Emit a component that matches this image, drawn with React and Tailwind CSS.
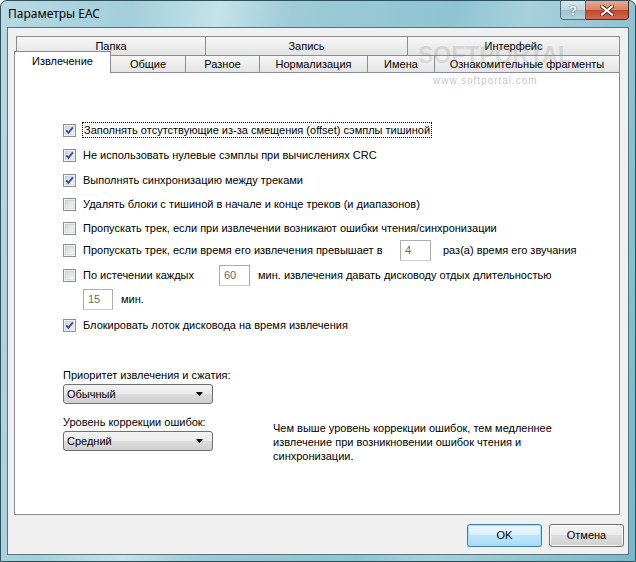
import React from 'react';

const font = { fontFamily: '"Liberation Sans", Arial, sans-serif' };

function CheckBox({ checked }) {
  return (
    <svg width="13" height="13" viewBox="0 0 13 13" className="shrink-0">
      <defs>
        <linearGradient id="cbg" x1="0" y1="0" x2="1" y2="1">
          <stop offset="0" stopColor="#cfd2d6" />
          <stop offset="1" stopColor="#f8f8f8" />
        </linearGradient>
      </defs>
      <rect x="0.5" y="0.5" width="12" height="12" fill="#fff" stroke="#8e8f8f" />
      <rect x="2" y="2" width="9" height="9" fill="url(#cbg)" stroke="#c3c6cb" strokeWidth="0.6" />
      {checked && (
        <path d="M3.2 6.4 L5.4 8.9 L9.9 3.4" fill="none" stroke="#3450a0" strokeWidth="1.9" />
      )}
    </svg>
  );
}

function Row({ checked, className = '', children }) {
  return (
    <div className={`flex h-[20px] items-center ${className}`}>
      <CheckBox checked={checked} />
      <div className="ml-[7px] flex items-center">{children}</div>
    </div>
  );
}

function NumBox({ value, w = 'w-[31px]' }) {
  return (
    <div className={`${w} h-[21px] shrink-0 border border-[#abadb3] border-b-[#c9ced4] bg-white pl-[4px] text-[11px] leading-[19px] text-[#6d6d6d]`}>
      {value}
    </div>
  );
}

function Combo({ value }) {
  return (
    <div className="flex h-[20px] w-[150px] items-center justify-between rounded-[3px] border border-[#707070] bg-[linear-gradient(#f2f2f2,#ebebeb_50%,#dddddd_50%,#cfcfcf)] pl-[3px] pr-[9px] text-[11px]">
      <span>{value}</span>
      <svg width="7" height="4" viewBox="0 0 7 4">
        <path d="M0 0 H7 L3.5 4 Z" fill="#000" />
      </svg>
    </div>
  );
}

function BackTab({ label, className = '' }) {
  return (
    <div className={`flex items-center justify-center border-t border-r border-[#898c95] bg-gradient-to-b from-[#f7f7f7] to-[#e3e3e3] text-[11px] ${className}`}>
      {label}
    </div>
  );
}

export default function App() {
  return (
    <div className="relative h-[562px] w-[636px] overflow-hidden bg-white text-black" style={font}>
      <div className="flex h-full flex-col rounded-t-[7px] border border-[#2e4f5b] bg-[linear-gradient(100deg,#b7d9e2_0%,#a3cfda_18%,#c4e2e9_30%,#9ecbd7_40%,#8ec4d2_62%,#a6d1dc_72%,#79b7c7_100%)] px-[6px] pb-[6px]">
        {/* title bar */}
        <div className="flex h-[26px] items-start justify-between">
          <div className="mt-[6px] pl-[1px] text-[12px] leading-[14px] text-black" style={{ fontFamily: '"Noto Sans", "Liberation Sans", sans-serif' }}>
            Параметры EAC
          </div>
          <div className="flex h-[19px]">
            <div className="flex w-[26px] items-center justify-center rounded-bl-[4px] border border-t-0 border-[#4b6e7a] bg-[linear-gradient(#d8e8ec,#bcd6dd_50%,#9fc3cd_50%,#b2d2da)] text-[13px] font-bold leading-none text-white [text-shadow:0_0_2px_#2c4a55]">
              ?
            </div>
            <div className="flex w-[43px] items-center justify-center rounded-br-[4px] border border-l-0 border-t-0 border-[#5a2a20] bg-[linear-gradient(#e8a691,#d7826a_50%,#c2452a_50%,#d56a4e)]">
              <svg width="14" height="11" viewBox="0 0 14 11">
                <path d="M2 1.5 L12 9.5 M12 1.5 L2 9.5" stroke="#5c2518" strokeWidth="4" strokeLinecap="square" />
                <path d="M2 1.5 L12 9.5 M12 1.5 L2 9.5" stroke="#fff" strokeWidth="2.2" strokeLinecap="square" />
              </svg>
            </div>
          </div>
        </div>

        {/* client */}
        <div className="flex flex-1 flex-col border border-[#56727c] bg-[#f0f0f0] pl-[6px] pr-[8px] pt-[8px]">
          {/* back row tabs */}
          <div className="ml-[2px] flex h-[19px]">
            <BackTab label="Папка" className="w-[190px] border-l" />
            <BackTab label="Запись" className="w-[202px]" />
            <BackTab label="Интерфейс" className="flex-1" />
          </div>
          {/* front row tabs */}
          <div className="flex h-[17px] items-end">
            <div className="relative z-10 -mb-px flex h-[22px] w-[97px] items-center justify-center border border-b-0 border-[#898c95] bg-white pb-[2px] text-[11px]">
              Извлечение
            </div>
            <BackTab label="Общие" className="h-[17px] w-[75px]" />
            <BackTab label="Разное" className="h-[17px] w-[74px]" />
            <BackTab label="Нормализация" className="h-[17px] w-[108px]" />
            <BackTab label="Имена" className="h-[17px] w-[67px]" />
            <BackTab label="Ознакомительные фрагменты" className="h-[17px] flex-1" />
          </div>

          {/* panel */}
          <div className="h-[443px] border border-[#898c95] bg-white pl-[48px] text-[11px]">
            <Row checked className="mt-[47px]">
              <span className="px-[1px] leading-[14px] outline-1 outline-dotted outline-black">
                Заполнять отсутствующие из-за смещения (offset) сэмплы тишиной
              </span>
            </Row>
            <Row checked className="mt-[5px]">Не использовать нулевые сэмплы при вычислениях CRC</Row>
            <Row checked className="mt-[5px]">Выполнять синхронизацию между треками</Row>
            <Row className="mt-[4px]">Удалять блоки с тишиной в начале и конце треков (и диапазонов)</Row>
            <Row className="mt-[4px]">Пропускать трек, если при извлечении возникают ошибки чтения/синхронизации</Row>
            <Row className="mt-[2px] h-[21px]">
              <span className="w-[317px]">Пропускать трек, если время его извлечения превышает в</span>
              <NumBox value="4" />
              <span className="ml-[12px]">раз(а) время его звучания</span>
            </Row>
            <Row className="mt-[4px] h-[21px]">
              <span className="w-[136px]">По истечении каждых</span>
              <NumBox value="60" />
              <span className="ml-[8px]">мин. извлечения давать дисководу отдых длительностью</span>
            </Row>
            <div className="ml-[20px] mt-[3px] flex h-[21px] items-center">
              <NumBox value="15" w="w-[30px]" />
              <span className="ml-[8px]">мин.</span>
            </div>
            <Row checked className="mt-[5px]">Блокировать лоток дисковода на время извлечения</Row>

            <div className="mt-[33px] leading-[14px]">Приоритет извлечения и сжатия:</div>
            <div className="mt-[2px]">
              <Combo value="Обычный" />
            </div>
            <div className="mt-[11px] flex">
              <div className="w-[150px]">
                <div className="leading-[14px]">Уровень коррекции ошибок:</div>
                <div className="mt-[2px]">
                  <Combo value="Средний" />
                </div>
              </div>
              <div className="ml-[60px] mt-[6px] leading-[14px]">
                Чем выше уровень коррекции ошибок, тем медленнее
                <br />
                извлечение при возникновении ошибок чтения и
                <br />
                синхронизации.
              </div>
            </div>
          </div>

          {/* buttons */}
          <div className="-mr-[4px] mt-[9px] flex justify-end gap-[7px] text-[11px]">
            <button className="h-[23px] w-[75px] rounded-[3px] border border-[#3c7fb1] bg-[linear-gradient(#eaf6fd,#d9f0fc_50%,#bee6fd_50%,#a7d9f5)] shadow-[inset_0_0_0_1px_#9ee0f7]">
              OK
            </button>
            <button className="h-[23px] w-[75px] rounded-[3px] border border-[#707070] bg-[linear-gradient(#f2f2f2,#ebebeb_50%,#dddddd_50%,#cfcfcf)] shadow-[inset_0_0_0_1px_#fcfcfc]">
              Отмена
            </button>
          </div>
        </div>
      </div>

      {/* watermark */}
      <div className="pointer-events-none absolute left-[418px] top-[38px] text-[23px] font-bold text-[rgba(120,120,120,0.2)]">
        SOFTPORTAL
      </div>
      <div className="pointer-events-none absolute left-[433px] top-[73px] text-[10px] tracking-[1px] text-[rgba(120,120,120,0.45)]">
        www.softportal.com
      </div>
    </div>
  );
}
